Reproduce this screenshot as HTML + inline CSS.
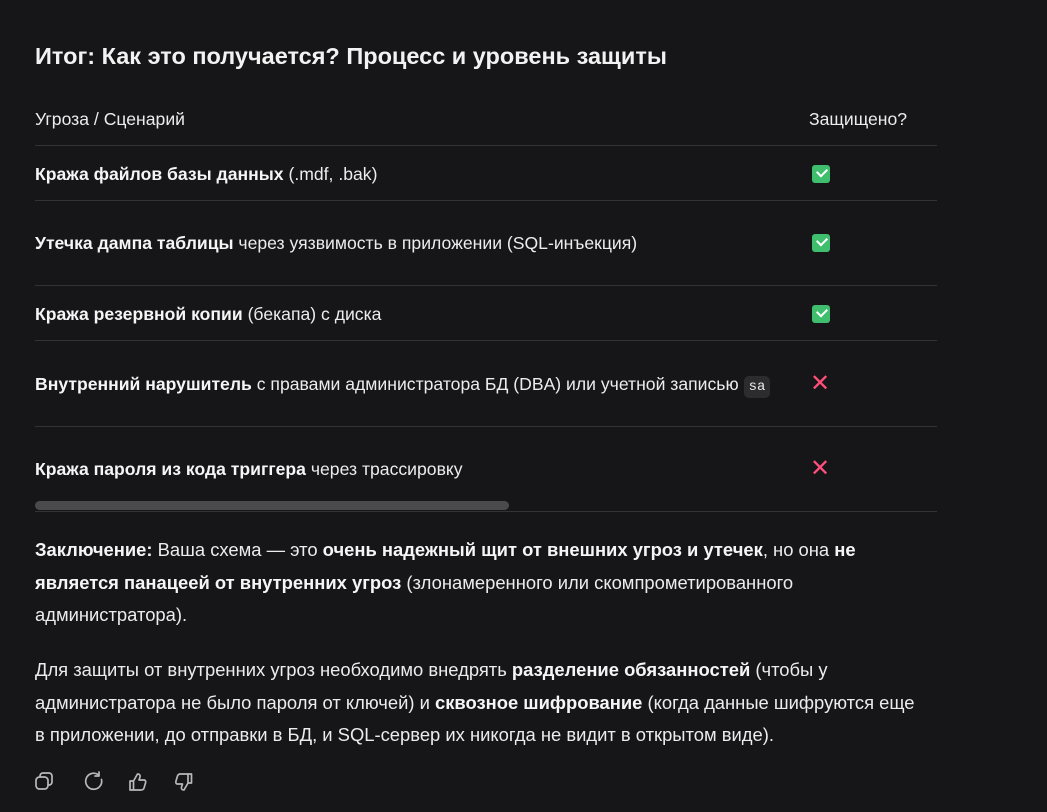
<!DOCTYPE html>
<html><head><meta charset="utf-8"><style>
body{margin:0;background:#161618;color:#ececec;font-family:"Liberation Sans","DejaVu Sans",sans-serif;width:1047px;height:812px;overflow:hidden;position:relative}
.a{position:absolute;white-space:nowrap}
h1{position:absolute;left:35px;top:43px;margin:0;font-size:23.5px;font-weight:bold;color:#f2f2f2;white-space:nowrap}
.t{font-size:17.6px}
.line{position:absolute;left:35px;width:902px;height:1px;background:#333336}
b{font-weight:bold;color:#f5f5f5}
.ok{position:absolute;left:812px;width:18px;height:18px;background:#3fbf6d;border-radius:3px}
.ok::after{content:"";position:absolute;left:5px;top:3px;width:8px;height:5px;border-left:2px solid #fff;border-bottom:2px solid #fff;transform:rotate(-45deg)}
.x{position:absolute;left:810px;font-size:24px;color:#ff4f7a;font-weight:bold;line-height:24px}
.code{background:#2c2c2f;border-radius:5px;padding:3px 5px;font-family:"Liberation Mono",monospace;font-size:14px}
p{position:absolute;left:35px;width:1000px;margin:0;font-size:18.4px;line-height:32.5px;white-space:nowrap}
</style></head><body>
<h1>Итог: Как это получается? Процесс и уровень защиты</h1>
<div class="a t" style="left:35px;top:109px">Угроза / Сценарий</div>
<div class="a t" style="left:809px;top:109px">Защищено?</div>
<div class="line" style="top:145px"></div>
<div class="a t" style="left:35px;top:164px"><b>Кража файлов базы данных</b> (.mdf, .bak)</div>
<div class="ok" style="top:165px"></div>
<div class="line" style="top:200px"></div>
<div class="a t" style="left:35px;top:233px"><b>Утечка дампа таблицы</b> через уязвимость в приложении (SQL-инъекция)</div>
<div class="ok" style="top:234px"></div>
<div class="line" style="top:285px"></div>
<div class="a t" style="left:35px;top:304px"><b>Кража резервной копии</b> (бекапа) с диска</div>
<div class="ok" style="top:305px"></div>
<div class="line" style="top:340px"></div>
<div class="a t" style="left:35px;top:374px"><b>Внутренний нарушитель</b> с правами администратора БД (DBA) или учетной записью <span class="code">sa</span></div>
<div class="x" style="top:372px">✕</div>
<div class="line" style="top:426px"></div>
<div class="a t" style="left:35px;top:459px"><b>Кража пароля из кода триггера</b> через трассировку</div>
<div class="x" style="top:457px">✕</div>
<div style="position:absolute;left:35px;top:501px;width:474px;height:9px;border-radius:5px;background:#4a4a4d"></div>
<div class="line" style="top:511px"></div>
<p style="top:534px"><b>Заключение:</b> Ваша схема — это <b>очень надежный щит от внешних угроз и утечек</b>, но она <b>не</b><br><b>является панацеей от внутренних угроз</b> (злонамеренного или скомпрометированного<br>администратора).</p>
<p style="top:654px">Для защиты от внутренних угроз необходимо внедрять <b>разделение обязанностей</b> (чтобы у<br>администратора не было пароля от ключей) и <b>сквозное шифрование</b> (когда данные шифруются еще<br>в приложении, до отправки в БД, и SQL-сервер их никогда не видит в открытом виде).</p>
<svg class="a" style="left:34px;top:771px" width="170" height="22" fill="none" stroke="#b8b8bc" stroke-width="1.7" stroke-linecap="round" stroke-linejoin="round">
<rect x="2" y="6" width="12" height="12" rx="3.5"/><path d="M6 6V5a3 3 0 0 1 3-3h6a3 3 0 0 1 3 3v6a3 3 0 0 1-3 3h-1"/>
<path d="M64 3.5a8 8 0 1 0 3.5 5"/><path d="M65 1v4h-4"/>
<path d="M96 10h3.5v9H96zM99.5 10l4-7c2 0 3 1 2.5 3l-1 3h5c1.5 0 2 1.5 1.5 3l-1.5 5c-.5 1.5-1.5 2-3 2h-7.5"/>
<path d="M154 12h3.5V3H154zM154 12l-4 7c-2 0-3-1-2.5-3l1-3h-5c-1.5 0-2-1.5-1.5-3l1.5-5c.5-1.5 1.5-2 3-2h7.5"/>
</svg>
</body></html>
